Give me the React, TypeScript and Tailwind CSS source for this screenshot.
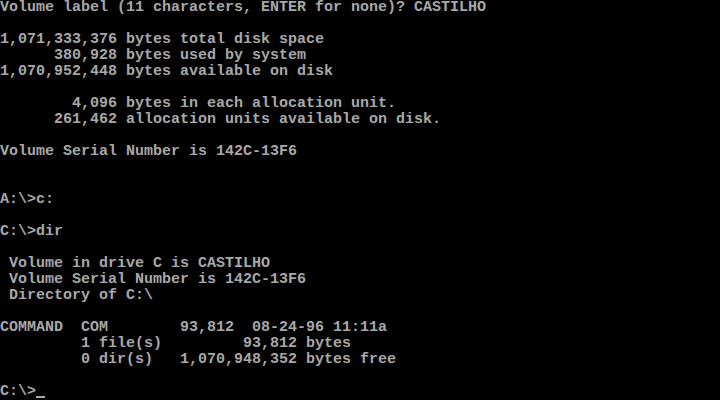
import React from "react";

const lines: string[] = [
  "Volume label (11 characters, ENTER for none)? CASTILHO",
  "",
  "1,071,333,376 bytes total disk space",
  "      380,928 bytes used by system",
  "1,070,952,448 bytes available on disk",
  "",
  "        4,096 bytes in each allocation unit.",
  "      261,462 allocation units available on disk.",
  "",
  "Volume Serial Number is 142C-13F6",
  "",
  "",
  "A:\\>c:",
  "",
  "C:\\>dir",
  "",
  " Volume in drive C is CASTILHO",
  " Volume Serial Number is 142C-13F6",
  " Directory of C:\\",
  "",
  "COMMAND  COM        93,812  08-24-96 11:11a",
  "         1 file(s)         93,812 bytes",
  "         0 dir(s)   1,070,948,352 bytes free",
  "",
];

export default function App() {
  return (
    <div
      className="w-[720px] h-[400px] bg-black text-[#a8a8a8] text-[15px] leading-[16px] font-bold overflow-hidden"
      style={{ fontFamily: '"Liberation Mono", "DejaVu Sans Mono", monospace' }}
    >
      {lines.map((l, i) => (
        <div key={i} className="h-[16px] whitespace-pre">
          {l}
        </div>
      ))}
      <div className="h-[16px] whitespace-pre flex">
        <span>{"C:\\>"}</span>
        <span className="inline-block w-[9px] h-[14px] border-b-2 border-[#a8a8a8]" />
      </div>
    </div>
  );
}
